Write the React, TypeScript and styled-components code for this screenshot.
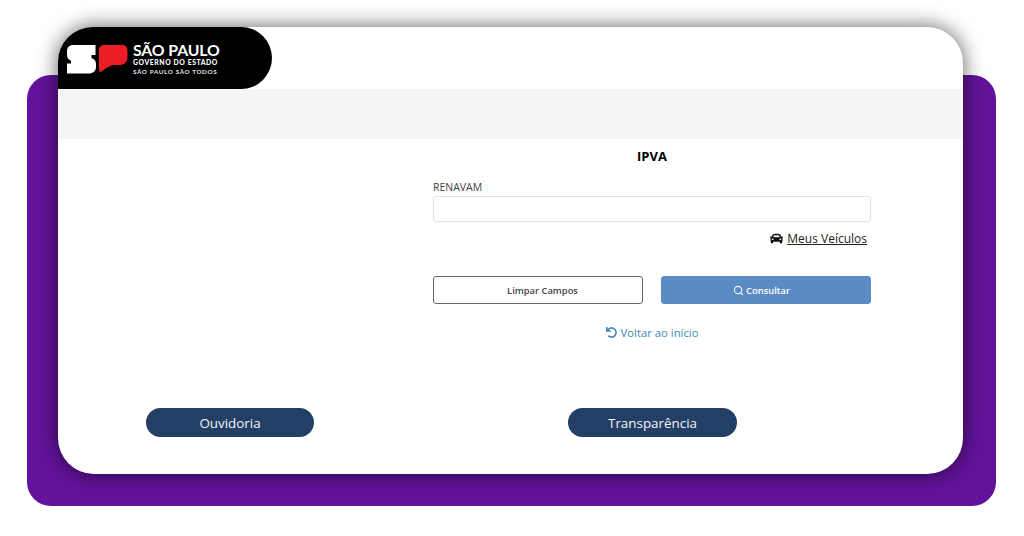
import * as React from "react";
import styled, { createGlobalStyle } from "styled-components";
import { FaCar, FaUndo } from "react-icons/fa";
import { Search } from "lucide-react";

const GlobalStyle = createGlobalStyle`
  html, body {
    margin: 0;
    padding: 0;
    background: #ffffff;
  }
  body {
    font-family: "Open Sans", "Liberation Sans", sans-serif;
    overflow: hidden;
  }
`;

const Page = styled.div`
  width: 1024px;
  height: 536px;
  padding: 75px 28px 0 27px;
  box-sizing: border-box;
`;

const PurplePanel = styled.div`
  height: 431px;
  display: flex;
  flex-direction: column;
  padding: 0 33px 0 31px;
  background: #63139b;
  border-radius: 24px;
`;

const Card = styled.main`
  height: 447px;
  flex: none;
  margin-top: -48px;
  display: flex;
  flex-direction: column;
  background: #ffffff;
  border-radius: 36px;
  box-shadow: 0 0 20px 1px rgba(0, 0, 0, 0.58);
`;

const TopBar = styled.header`
  height: 62px;
  flex: none;
  display: flex;
`;

const LogoBadge = styled.div`
  width: 214px;
  display: flex;
  align-items: center;
  gap: 5px;
  padding: 2px 0 0 9px;
  box-sizing: border-box;
  background: #000000;
  border-radius: 36px 32px 32px 0;
`;

const LogoWords = styled.div`
  display: flex;
  flex-direction: column;
  color: #ffffff;
  font-family: "Lato", "Liberation Sans", sans-serif;
  font-weight: 700;
  white-space: nowrap;
`;

const LogoTitle = styled.span`
  font-size: 15.8px;
  line-height: 15px;
  letter-spacing: -0.1px;
  margin-bottom: 1px;
`;

const LogoSub = styled.span`
  font-size: 6.8px;
  line-height: 9px;
  font-weight: 900;
  letter-spacing: 0.6px;
`;

const LogoSlogan = styled(LogoSub)`
  font-weight: 700;
  font-size: 6.3px;
  letter-spacing: 0.62px;
  color: #e0e0e0;
`;

const GreyBand = styled.div`
  height: 50px;
  flex: none;
  background: #f5f5f5;
`;

const Form = styled.section`
  width: 438px;
  margin-left: 375px;
  display: flex;
  flex-direction: column;
`;

const Title = styled.h1`
  margin: 8px 0 0;
  font-size: 13px;
  line-height: 18px;
  font-weight: 700;
  color: #000000;
  text-align: center;
`;

const FieldLabel = styled.label`
  margin-top: 14px;
  font-size: 10.5px;
  line-height: 16px;
  color: #444444;
`;

const TextInput = styled.input`
  height: 26px;
  margin-top: 1px;
  padding: 0 8px;
  box-sizing: border-box;
  background: #ffffff;
  border: 1px solid #dfe2e5;
  border-radius: 3px;
  outline: none;
`;

const VehiclesRow = styled.div`
  display: flex;
  justify-content: flex-end;
  align-items: center;
  gap: 4px;
  height: 18px;
  margin-top: 7px;
  padding-right: 4px;
  color: #111111;
`;

const VehiclesLink = styled.a`
  font-size: 12px;
  font-weight: 500;
  color: #222222;
  text-decoration: underline;
`;

const Actions = styled.div`
  display: grid;
  grid-template-columns: 1fr 1fr;
  gap: 18px;
  margin-top: 29px;
`;

const ActionButton = styled.button<{ $primary?: boolean }>`
  height: 28px;
  display: flex;
  align-items: center;
  justify-content: center;
  gap: 2px;
  padding: ${({ $primary }) => ($primary ? "0 9px 0 0" : "0 0 0 9px")};
  font-family: inherit;
  font-size: 9.4px;
  font-weight: 600;
  border-radius: 3px;
  color: ${({ $primary }) => ($primary ? "#ffffff" : "#444444")};
  background: ${({ $primary }) => ($primary ? "#5b8bc4" : "#ffffff")};
  border: 1px solid ${({ $primary }) => ($primary ? "#5b8bc4" : "#666666")};
`;

const BackLink = styled.a`
  display: flex;
  align-items: center;
  justify-content: center;
  gap: 4px;
  margin-top: 20px;
  height: 16px;
  font-size: 11.3px;
  color: #3d86b8;
`;

const FooterLinks = styled.nav`
  display: flex;
  gap: 254px;
  margin-top: 68px;
  padding-left: 88px;
`;

const PillButton = styled.a<{ $wide?: boolean }>`
  width: ${({ $wide }) => ($wide ? 169 : 168)}px;
  height: 29px;
  display: flex;
  align-items: center;
  justify-content: center;
  background: #233f66;
  border-radius: 15px;
  color: #f2f5f9;
  font-size: 13.4px;
`;

function SpLogo() {
  return (
    <svg width="61" height="29" viewBox="0 0 61 29" aria-hidden="true">
      <path
        fill="#ffffff"
        d="M6 0H28.5V10H24.5V13H23C26.5 13 29 15.5 29 19V22C29 26 26 28.5 22 28.5H0V18.5H4V16H5C2 15.5 0 13 0 10V6C0 2.5 2.5 0 6 0Z"
      />
      <path
        fill="#ee1c25"
        d="M32 5C32 2 34 0 37 0H55C58.5 0 60.5 2 60.5 5.5V12C60.5 17.5 57 20 52 20H46C42 21 37 24.5 33 27.5C31.5 24 32 18 32 13Z"
      />
    </svg>
  );
}

export default function App() {
  return (
    <>
      <GlobalStyle />
      <Page>
        <PurplePanel>
          <Card>
            <TopBar>
              <LogoBadge>
                <SpLogo />
                <LogoWords>
                  <LogoTitle>SÃO PAULO</LogoTitle>
                  <LogoSub>GOVERNO DO ESTADO</LogoSub>
                  <LogoSlogan>SÃO PAULO SÃO TODOS</LogoSlogan>
                </LogoWords>
              </LogoBadge>
            </TopBar>
            <GreyBand />
            <Form>
              <Title>IPVA</Title>
              <FieldLabel htmlFor="renavam">RENAVAM</FieldLabel>
              <TextInput id="renavam" type="text" />
              <VehiclesRow>
                <FaCar size={13} />
                <VehiclesLink>Meus Veículos</VehiclesLink>
              </VehiclesRow>
              <Actions>
                <ActionButton>Limpar Campos</ActionButton>
                <ActionButton $primary>
                  <Search size={11} strokeWidth={2.2} />
                  Consultar
                </ActionButton>
              </Actions>
              <BackLink>
                <FaUndo size={11} />
                Voltar ao início
              </BackLink>
            </Form>
            <FooterLinks>
              <PillButton>Ouvidoria</PillButton>
              <PillButton $wide>Transparência</PillButton>
            </FooterLinks>
          </Card>
        </PurplePanel>
      </Page>
    </>
  );
}
